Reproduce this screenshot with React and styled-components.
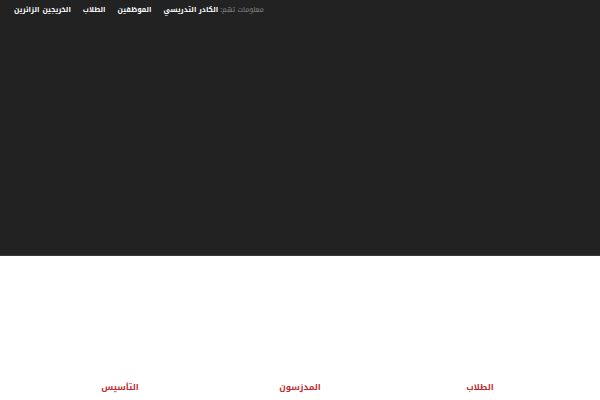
import React from "react";
import styled, { createGlobalStyle } from "styled-components";

const GlobalStyle = createGlobalStyle`
  html, body {
    margin: 0;
    padding: 0;
    background: #fff;
    font-family: "Noto Kufi Arabic", "DejaVu Sans", sans-serif;
  }
`;

const Hero = styled.header`
  height: 255px;
  background: #222222;
  border-bottom: 1px solid #3a3a3a;
`;

const TopBar = styled.nav`
  display: flex;
  justify-content: flex-start;
  padding: 2px 14px 0;
`;

const LinkList = styled.ul`
  direction: rtl;
  display: flex;
  align-items: center;
  gap: 12px;
  margin: 0;
  padding: 0;
  list-style: none;
  font-size: 7px;
  font-weight: bold;
  line-height: 16px;
`;

const Label = styled.li`
  color: #8a8a8a;
  font-weight: normal;
  margin-left: -10px;
`;

const Item = styled.li`
  color: #fff;
  margin-right: ${(p) => p.$tight || 0}px;
`;

const Sections = styled.section`
  direction: rtl;
  display: grid;
  grid-template-columns: repeat(3, 1fr);
  padding: 120px 30px 0;
`;

const Column = styled.div`
  text-align: center;
`;

const Heading = styled.h3`
  margin: 0;
  color: #c0282d;
  font-size: 8.5px;
  font-weight: bold;
  line-height: 22px;
`;

const links = ["الكادر التدريسي", "الموظفين", "الطلاب", "الخريجين", "الزائرين"];
const columns = ["الطلاب", "المدزسون", "التأسيس"];

export default function App() {
  return (
    <>
      <GlobalStyle />
      <Hero>
        <TopBar>
          <LinkList>
            <Label>معلومات تهم:</Label>
            {links.map((l, i) => (
              <Item key={l} $tight={i === 4 ? -9 : 0}>
                {l}
              </Item>
            ))}
          </LinkList>
        </TopBar>
      </Hero>
      <Sections>
        {columns.map((c) => (
          <Column key={c}>
            <Heading>{c}</Heading>
          </Column>
        ))}
      </Sections>
    </>
  );
}
